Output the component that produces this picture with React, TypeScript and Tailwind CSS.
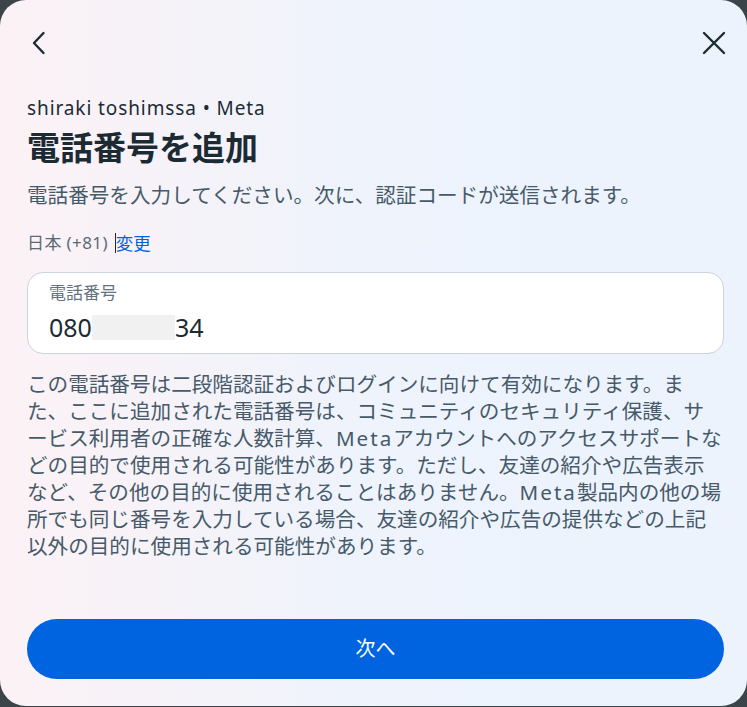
import React from 'react';

const font = { fontFamily: '"Noto Sans", "Noto Sans CJK JP", sans-serif' };

const M = () => <span className="tracking-[2px]">Meta</span>;

const App: React.FC = () => {
  return (
    <div className="w-[747px] h-[707px] bg-[#3b4449]" style={font}>
      <div className="h-[706px] rounded-[26px] bg-gradient-to-r from-[#fcf2f6] via-[#eef3fc] to-[#ecf3fd] flex flex-col pl-[27px] pr-[23px] text-[#1c2b33]">
        {/* ヘッダー */}
        <div className="pt-[31px] h-[55px] flex items-center justify-between">
          <svg width="24" height="24" viewBox="0 0 24 24" className="ml-[1px]" fill="none" stroke="#1c2b33" strokeWidth="2.4" strokeLinecap="round" strokeLinejoin="round">
            <path d="M15.5 2 6 12l9.5 10" />
          </svg>
          <svg width="24" height="24" viewBox="0 0 24 24" className="mr-[-2px]" fill="none" stroke="#1c2b33" strokeWidth="2.4" strokeLinecap="round">
            <path d="M2 2l20 20M22 2 2 22" />
          </svg>
        </div>

        <p className="mt-[41px] text-[19px] leading-[24px] tracking-[0.9px] text-[#1c2b33]">shiraki toshimssa • Meta</p>
        <h1 className="mt-[8px] text-[33px] leading-[40px] font-bold text-[#1c2b33]">電話番号を追加</h1>
        <p className="mt-[13px] text-[20.6px] leading-[28px] text-[#465a69] whitespace-nowrap">
          電話番号を入力してください。次に、認証コードが送信されます。
        </p>
        <div className="mt-[22px] text-[17px] leading-[24px] text-[#5b6b76] flex items-center">
          <span className="tracking-[0.4px]">日本 (+81)&nbsp;</span>
          <span className="w-px h-[20px] bg-[#1c2b33] ml-[2px]" />
          <span className="text-[#0064e0] text-[17.5px]">変更</span>
        </div>

        {/* 入力欄 */}
        <div className="mt-[17px] h-[82px] rounded-[16px] border border-[#ccd3da] bg-white px-[21px] pt-[10px]">
          <div className="text-[17px] leading-[20px] text-[#65737e]">電話番号</div>
          <div className="mt-[10px] text-[25px] leading-[28px] text-[#1c2b33] flex items-center">
            <span>080</span>
            <span className="inline-block w-[83px] h-[25px] bg-[#f1f1f1]" />
            <span>34</span>
          </div>
        </div>

        <div className="mt-[17px] text-[20.6px] leading-[27px] text-[#465a69] whitespace-nowrap">
          <div>この電話番号は二段階認証およびログインに向けて有効になります。ま</div>
          <div>た、ここに追加された電話番号は、コミュニティのセキュリティ保護、サ</div>
          <div>ービス利用者の正確な人数計算、<M />アカウントへのアクセスサポートな</div>
          <div>どの目的で使用される可能性があります。ただし、友達の紹介や広告表示</div>
          <div>など、その他の目的に使用されることはありません。<M />製品内の他の場</div>
          <div>所でも同じ番号を入力している場合、友達の紹介や広告の提供などの上記</div>
          <div>以外の目的に使用される可能性があります。</div>
        </div>

        <button className="mt-auto mb-[27px] h-[60px] w-full rounded-full bg-[#0064e0] text-white text-[20px]">
          次へ
        </button>
      </div>
    </div>
  );
};

export default App;
